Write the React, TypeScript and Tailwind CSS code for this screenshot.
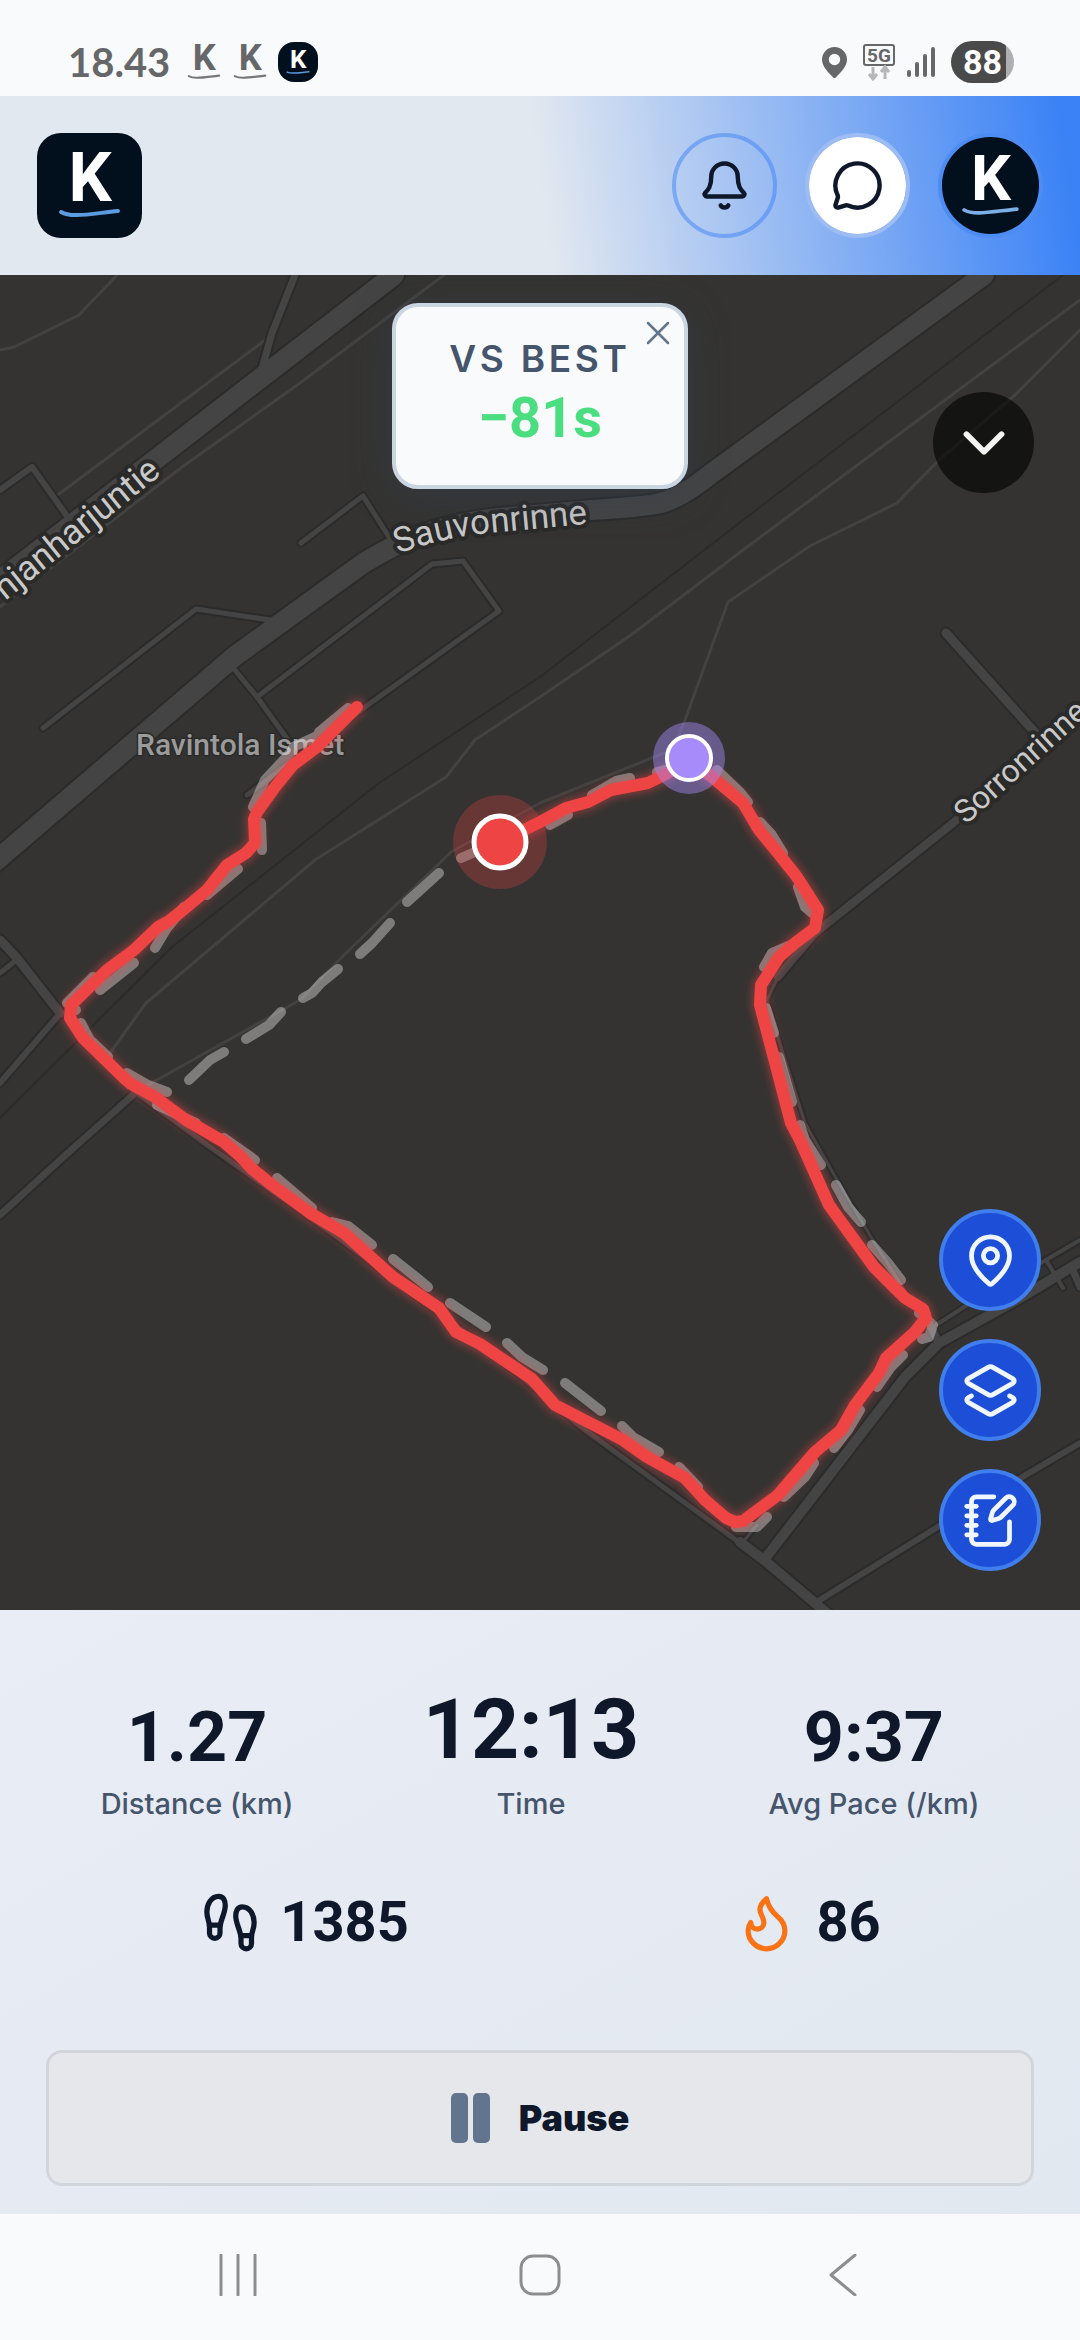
import type { ReactNode } from "react";
import {
  Bell,
  ChevronDown,
  Flame,
  Footprints,
  Layers2,
  MapPin,
  MessageCircle,
  NotebookPen,
  X,
} from "lucide-react";

type Road = { d: string; w: number };

const THIN_PATHS = [
  "M272 335L55 497",
  "M117 275L79 315L14 347L0 350",
  "M444 275L300 383L182 467L0 607",
  "M1080 300L747 547L631 635L540 697L475 740L446 777L315 860L146 1003L110 1053",
  "M1080 330L1015 395L939 460L897 503L810 546L728 602L685 720L664 770",
  "M664 753L540 803L451 852L344 955L300 1000L148 1085",
];

const RAIL = "M1063 275L747 517L540 677L379 783L172 947L0 1118";

const ROADS: Road[] = [
  { d: "M295 275L272 333L261 372", w: 7 },
  { d: "M0 490L32 467L67 516", w: 6 },
  { d: "M301 543L363 496L389 537", w: 5 },
  { d: "M270 620L196 609L43 728", w: 5 },
  { d: "M234 669L257 697L288 740", w: 5 },
  { d: "M257 697L432 564L463 561L499 611L365 707L247 795", w: 5 },
  { d: "M133 1095L60 1160L0 1215", w: 7 },
  { d: "M0 940L17 958L60 1013", w: 9 },
  { d: "M0 973L14 962", w: 5 },
  { d: "M57 1017L0 1083", w: 6 },
  { d: "M133 1090L207 1145L310 1217L400 1283L520 1375L585 1430L740 1543", w: 5 },
  { d: "M743 1542L757 1525", w: 3 },
  { d: "M815 1603L936 1528L1080 1443", w: 6 },
  { d: "M936 1325L964 1307L1046 1260L1080 1240", w: 4 },
  { d: "M1046 1260L1063 1288", w: 4 },
  { d: "M1072 1268L1080 1287", w: 7 },
  { d: "M946 633L1039 737", w: 9 },
  { d: "M1080 712L953 823L815 933L778 977", w: 8 },
  { d: "M778 977L767 1000L781 1047L805 1123L833 1173L871 1237L915 1307L939 1343", w: 3 },
  { d: "M740 1542L764 1560L815 1603L828 1614", w: 10 },
  { d: "M764 1560L905 1377L939 1343L1022 1297L1080 1262", w: 10 },
  { d: "M930 1325L939 1343", w: 8 },
  { d: "M394 275L262 377L155 460L-10 588", w: 20 },
  { d: "M984 275L712 473Q682 497 664 502Q655 506 592 510L500 518Q440 524 392 547L365 562L235 656L207 680L-10 866", w: 20 },
];

// Previous best run, drawn as separate strokes
const GHOST =
  "M439 873L407 902M390 923L372 943L360 954M338 969L322 982L312 993L303 998M281 1012L269 1025L246 1039M224 1052L210 1060L189 1080M167 1092L148 1085L127 1073" +
  "M461 858L475 852M348 708L319 732M317 736L293 747M293 750L265 780L253 807M261 823L262 850M238 869L207 895M184 907L167 928L155 948M134 963L100 990M93 977L67 1003L76 1010" +
  "M81 1023L90 1040L108 1057M157 1105L196 1123M224 1138L255 1160M277 1178L312 1208M332 1222L348 1226L372 1245M393 1259L417 1278L428 1287M450 1303L486 1327" +
  "M507 1343L522 1357L543 1370M565 1383L601 1411M622 1426L633 1437L659 1452M679 1467L698 1487M736 1527L757 1527L767 1517M814 1463L805 1477L784 1497" +
  "M860 1410L848 1430L834 1448M903 1355L891 1367L877 1387M922 1339L929 1337L933 1325L919 1313M901 1280L888 1263L872 1245M861 1222L848 1207L836 1185" +
  "M821 1165L805 1140L800 1125M792 1102L779 1057M774 1033L766 1008M764 967L772 953L795 943M812 913L805 907L798 887M783 853L772 835L760 822" +
  "M748 802L740 792L717 770M657 772L673 768M630 778L616 781L592 795M568 815L550 825";

const TRACK =
  "M357 707L339 725L317 747L293 765L275 787L257 812L254 819L255 843L246 853L227 865L207 890L183 910L169 921L158 927L134 950L107 970L71 1005L70 1018L83 1038" +
  "L124 1078L131 1084L155 1097L186 1120L224 1142L241 1157L251 1168L272 1185L310 1213L344 1233L393 1277L439 1308L456 1332L480 1344L532 1379L540 1388L555 1405" +
  "L623 1440L647 1457L685 1478L705 1500L726 1518L735 1522L743 1521L778 1495L815 1452L841 1430L855 1405L879 1373L886 1358L915 1332L926 1318L923 1309L905 1298" +
  "L874 1267L829 1205L800 1140L791 1123L760 1005L761 985L779 957L795 943L815 928L818 910L797 877L778 853L759 830L743 803L712 777L689 760L664 775L648 783" +
  "L611 790L588 802L566 808L540 822L500 842";

function RouteMap() {
  return (
    <svg
      className="absolute inset-0 size-full"
      viewBox="0 275 1080 1335"
      preserveAspectRatio="xMidYMid slice"
      role="img"
      aria-label="Route map"
    >
      <defs>
        <filter id="glow" x="-10%" y="-10%" width="120%" height="120%">
          <feGaussianBlur stdDeviation="4" />
        </filter>
        <path id="sauvonrinne" d="M398 554Q445 536 500 532L640 519" />
      </defs>
      <rect x="0" y="275" width="1080" height="1335" fill="#343331" />

      <g fill="none" strokeLinejoin="round" strokeLinecap="round">
        <path d={RAIL} stroke="#2c2b2a" strokeWidth="2" />
        {THIN_PATHS.map((d) => (
          <path key={d} d={d} stroke="#434241" strokeWidth="3" />
        ))}
        {ROADS.map((r) => (
          <path key={r.d} d={r.d} stroke="#2b2b2b" strokeWidth={r.w + 4} />
        ))}
        {ROADS.map((r) => (
          <path key={r.d} d={r.d} stroke="#444444" strokeWidth={r.w} />
        ))}
      </g>

      <g
        className="font-[Roboto,sans-serif]"
        stroke="#2a2a29"
        strokeWidth="8"
        strokeLinejoin="round"
        paintOrder="stroke"
      >
        <text transform="translate(162 474) rotate(-39)" textAnchor="end" fontSize="35" fill="#c9c9c9">
          njanharjuntie
        </text>
        <text fontSize="35" fill="#c9c9c9">
          <textPath href="#sauvonrinne">Sauvonrinne</textPath>
        </text>
        <text transform="translate(966 825) rotate(-42)" fontSize="32" fill="#c9c9c9">
          Sorronrinne
        </text>
        <text x="136" y="755" fontSize="30" fontWeight="500" fill="#9b9b9b" strokeWidth="3">
          Ravintola Ismet
        </text>
      </g>

      <g fill="none" strokeLinejoin="round" strokeLinecap="round">
        <path d={GHOST} stroke="#ffffff" strokeOpacity="0.36" strokeWidth="10" />
        <path d={TRACK} stroke="#ef4444" strokeOpacity="0.45" strokeWidth="16" filter="url(#glow)" />
        <path d={TRACK} stroke="#ef4444" strokeWidth="12" />
      </g>

      <circle cx="689" cy="758" r="36" fill="#a78bfa" fillOpacity="0.45" />
      <circle cx="689" cy="758" r="22" fill="#a78bfa" stroke="#ffffff" strokeWidth="4" />
      <circle cx="500" cy="842" r="47" fill="#ef4444" fillOpacity="0.27" />
      <circle cx="500" cy="842" r="26" fill="#ef4444" stroke="#ffffff" strokeWidth="5" />
    </svg>
  );
}

function LogoMark({ className, swoosh }: { className: string; swoosh: string }) {
  return (
    <svg viewBox="0 0 105 105" className={className} aria-hidden="true">
      <text
        x="53"
        y="68"
        textAnchor="middle"
        fontSize="68"
        fontWeight="700"
        fill="currentColor"
        className="font-[Roboto,sans-serif]"
      >
        K
      </text>
      <path
        d="M24 79C34 85 52 81 81 78"
        fill="none"
        stroke={swoosh}
        strokeWidth="4"
        strokeLinecap="round"
      />
    </svg>
  );
}

function StatusBar() {
  return (
    <div className="flex h-24 items-center justify-between bg-[#f9fafc] pt-7 pr-[66px] pl-[68px] text-[#666769]">
      <div className="flex items-center">
        <span className="font-[Lato,sans-serif] text-[40px] leading-10 font-bold">18.43</span>
        <LogoMark className="ml-1.5 size-14" swoosh="#77787a" />
        <LogoMark className="-ml-2.5 size-14" swoosh="#77787a" />
        <span className="flex size-10 items-center justify-center rounded-[16px] bg-[#020f1c] text-white">
          <LogoMark className="size-10" swoosh="#5b9be0" />
        </span>
      </div>
      <div className="flex items-center gap-4">
        <svg viewBox="0 0 25 31" className="h-[31px] w-[25px]" aria-hidden="true">
          <path
            fill="currentColor"
            fillRule="evenodd"
            d="M12.500 0A12.500 12.500 0 0 0 0 12.500C0 20 7 26 11 30.300a2 2 0 0 0 3 0C18 26 25 20 25 12.500A12.500 12.500 0 0 0 12.500 0Zm0 6.800a5.700 5.700 0 1 1 0 11.400 5.700 5.700 0 0 1 0-11.400Z"
          />
        </svg>
        <svg viewBox="0 0 32 37" className="h-[37px] w-8" aria-hidden="true">
          <rect x="1" y="1" width="30" height="20" rx="2" fill="none" stroke="currentColor" strokeWidth="2" />
          <text
            x="16"
            y="18"
            textAnchor="middle"
            fontSize="19"
            fontWeight="700"
            fill="currentColor"
            className="font-[Roboto,sans-serif]"
          >
            5G
          </text>
          <path
            d="M10 23V34M6 30L10 35L14 30M22 35V24M18 28L22 23L26 28"
            fill="none"
            stroke="#b5b6b8"
            strokeWidth="3"
          />
        </svg>
        <svg viewBox="0 0 28 30" className="-ml-1 h-[30px] w-7" aria-hidden="true">
          <path
            d="M2 25V28M10 17V28M18 9V28M26 2V28"
            stroke="currentColor"
            strokeWidth="4"
            strokeLinecap="round"
          />
        </svg>
        <span className="flex h-[42px] w-[63px] items-center overflow-hidden rounded-full bg-[linear-gradient(to_right,#4a4a4a_55px,#aeafb1_55px)] pl-3 font-[Roboto,sans-serif] text-[34px] leading-10 font-bold text-white">
          88
        </span>
      </div>
    </div>
  );
}

function AppHeader() {
  return (
    <header className="flex items-center justify-between bg-[linear-gradient(82deg,#e2e8f0_50%,#3b82f6_98%)] p-[37px]">
      <a href="#home" aria-label="Home" className="block size-[105px] rounded-3xl bg-[#020f1c] text-white">
        <LogoMark className="size-full" swoosh="#5b9be0" />
      </a>
      <div className="flex gap-7 text-slate-900">
        <button
          type="button"
          aria-label="Notifications"
          className="flex size-[105px] items-center justify-center rounded-full border-4 border-[#3b82f6]/50"
        >
          <Bell className="size-[53px]" />
        </button>
        <button
          type="button"
          aria-label="Messages"
          className="flex size-[105px] items-center justify-center rounded-full border-4 border-[#9dbcf4] bg-white bg-clip-padding"
        >
          <MessageCircle className="size-[53px]" />
        </button>
        <button
          type="button"
          aria-label="Profile"
          className="size-[105px] overflow-hidden rounded-full border-4 border-[#4c8cf3] bg-[#020f1c] text-white"
        >
          <LogoMark className="size-full" swoosh="#7ab0e6" />
        </button>
      </div>
    </header>
  );
}

function MapButton({ label, children }: { label: string; children: ReactNode }) {
  return (
    <button
      type="button"
      aria-label={label}
      className="flex size-[102px] items-center justify-center rounded-full border-4 border-[#3f7eec] bg-[#1d4ed8] text-blue-50"
    >
      {children}
    </button>
  );
}

function Stat({ value, label, large = false }: { value: string; label: string; large?: boolean }) {
  return (
    <div className="flex flex-col items-center">
      <span
        className={`font-[Roboto,sans-serif] leading-none font-bold text-slate-900 ${
          large ? "text-[84px]" : "text-[70px]"
        }`}
      >
        {value}
      </span>
      <span className="mt-3 font-[Inter,sans-serif] text-[29px] leading-10 font-medium text-slate-600">{label}</span>
    </div>
  );
}

export default function App() {
  return (
    <div className="flex min-h-screen flex-col bg-[#f9fafc]">
      <StatusBar />
      <AppHeader />

      <main className="flex flex-1 flex-col">
        <section className="relative min-h-[900px] flex-1 overflow-hidden bg-[#343331]">
          <RouteMap />

          <div className="absolute top-7 left-1/2 w-[296px] -translate-x-1/2 rounded-[26px] border-4 border-slate-300 bg-[#f9fafc] pt-8 pb-8 text-center shadow-[0_8px_40px_rgba(51,65,85,0.45)]">
            <p className="font-[Inter,sans-serif] text-[37px] leading-10 font-semibold tracking-widest text-slate-600">
              VS BEST
            </p>
            <p className="mt-1 font-[Roboto,sans-serif] text-[56px] leading-[70px] font-bold text-[#4ade80]">−81s</p>
            <button type="button" aria-label="Close" className="absolute top-1.5 right-1.5 text-slate-500">
              <X className="size-10" strokeWidth={1.5} />
            </button>
          </div>

          <button
            type="button"
            aria-label="Collapse"
            className="absolute top-[117px] right-[46px] flex size-[101px] items-center justify-center rounded-full bg-black/60 text-[#f3f3f3]"
          >
            <ChevronDown className="size-[70px]" />
          </button>

          <div className="absolute right-[39px] bottom-[39px] flex flex-col gap-7">
            <MapButton label="Centre on location">
              <MapPin className="size-[57px]" />
            </MapButton>
            <MapButton label="Map layers">
              <Layers2 className="size-[57px]" />
            </MapButton>
            <MapButton label="Add note">
              <NotebookPen className="size-[57px]" />
            </MapButton>
          </div>
        </section>

        <section className="bg-linear-to-br from-[#e9edf5] to-slate-200 pt-[78px] pb-7">
          <div className="flex items-end justify-around px-9">
            <Stat value="1.27" label="Distance (km)" />
            <Stat value="12:13" label="Time" large />
            <Stat value="9:37" label="Avg Pace (/km)" />
          </div>

          <div className="mt-[67px] flex justify-around px-9 font-[Roboto,sans-serif] text-[56px] leading-[63px] font-bold text-slate-900">
            <div className="flex items-center gap-[18px]">
              <Footprints className="size-[63px]" />
              <span>1385</span>
            </div>
            <div className="flex items-center gap-[18px]">
              <Flame className="size-[63px] text-[#f97316]" />
              <span>86</span>
            </div>
          </div>

          <div className="mt-24 px-[46px]">
            <button
              type="button"
              className="flex h-[136px] w-full items-center justify-center gap-7 rounded-2xl border-[3px] border-gray-300 bg-gray-200"
            >
              <svg viewBox="0 0 40 50" className="h-[50px] w-10 text-slate-500" aria-hidden="true">
                <rect x="0" y="0" width="17" height="50" rx="5" fill="currentColor" />
                <rect x="22" y="0" width="17" height="50" rx="5" fill="currentColor" />
              </svg>
              <span className="font-[Inter,sans-serif] text-[36px] leading-10 font-black text-slate-900">Pause</span>
            </button>
          </div>
        </section>
      </main>

      <nav className="flex h-[126px] items-center justify-between px-[217px] pb-1 text-[#8c8d8f]">
        <button type="button" aria-label="Recent apps">
          <svg viewBox="0 0 42 42" className="size-[42px]" fill="none" stroke="currentColor" strokeWidth="3">
            <path d="M4 1V41M21 1V41M38 1V41" strokeLinecap="round" />
          </svg>
        </button>
        <button type="button" aria-label="Home screen">
          <svg viewBox="0 0 42 42" className="size-[42px]" fill="none" stroke="currentColor" strokeWidth="3">
            <rect x="2" y="2" width="38" height="38" rx="12" />
          </svg>
        </button>
        <button type="button" aria-label="Back">
          <svg viewBox="0 0 42 42" className="size-[42px]" fill="none" stroke="currentColor" strokeWidth="3">
            <path d="M34 1L10 21L34 41" strokeLinecap="round" strokeLinejoin="round" />
          </svg>
        </button>
      </nav>
    </div>
  );
}
